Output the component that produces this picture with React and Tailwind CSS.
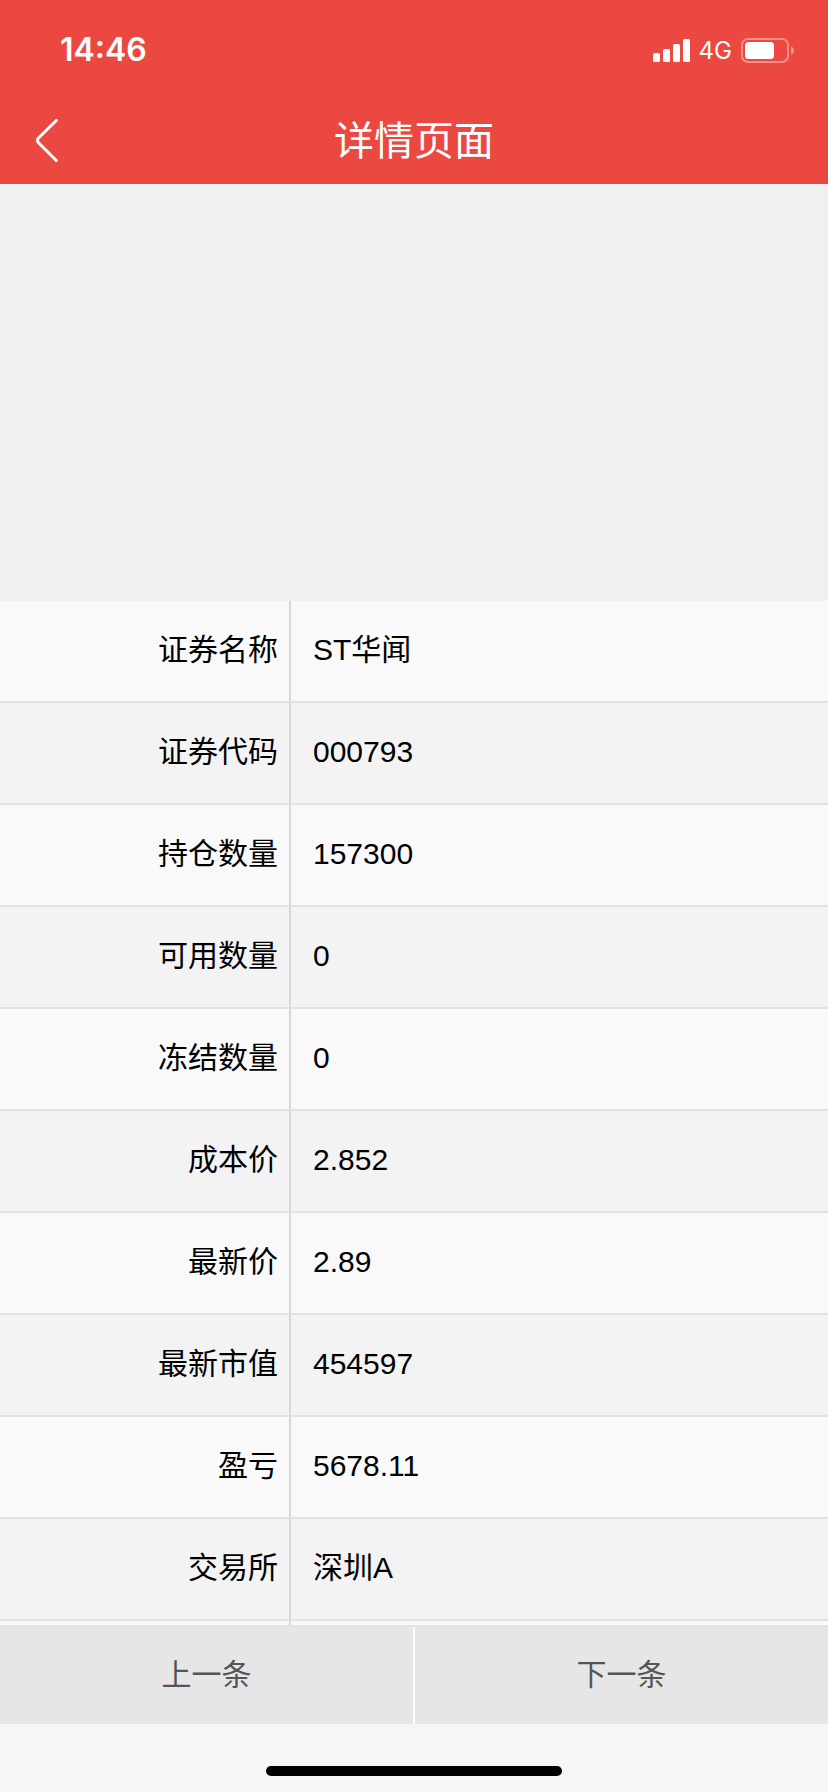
import React from 'react';

const rows = [
    { label: '证券名称', value: 'ST华闻' },
    { label: '证券代码', value: '000793' },
    { label: '持仓数量', value: '157300' },
    { label: '可用数量', value: '0' },
    { label: '冻结数量', value: '0' },
    { label: '成本价', value: '2.852' },
    { label: '最新价', value: '2.89' },
    { label: '最新市值', value: '454597' },
    { label: '盈亏', value: '5678.11' },
    { label: '交易所', value: '深圳A' },
];

const StatusBar = () => (
    <div className="flex h-24 items-center justify-between pt-1 pr-[34px] pl-[60px] font-[Inter,sans-serif]">
        <span className="text-[32px] leading-10 font-semibold">14:46</span>
        <div className="flex items-center gap-[9px]">
            <svg width="37" height="23" viewBox="0 0 37 23" fill="currentColor" aria-hidden="true">
                <rect x="0" y="14" width="7" height="9" rx="1.5" />
                <rect x="10" y="10" width="7" height="13" rx="1.5" />
                <rect x="20" y="5" width="7" height="18" rx="1.5" />
                <rect x="30" y="0" width="7" height="23" rx="1.5" />
            </svg>
            <span className="pt-0.5 text-2xl">4G</span>
            <svg width="53" height="25" viewBox="0 0 53 25" fill="none" aria-hidden="true">
                <rect x="1" y="1" width="46" height="23" rx="6" stroke="currentColor" strokeWidth="2" opacity="0.4" />
                <rect x="4" y="4" width="29" height="17" rx="3.5" fill="currentColor" />
                <path d="M50 8.2c1.8.8 3 2.4 3 4.3s-1.2 3.500-3 4.300z" fill="currentColor" opacity="0.4" />
            </svg>
        </div>
    </div>
);

const Header = () => (
    <header className="shrink-0 bg-[#ea4840] text-white">
        <StatusBar />
        <div className="grid h-22 grid-cols-[96px_1fr_96px] items-center">
            <button type="button" aria-label="返回" className="flex h-full items-center pl-9">
                <svg width="22" height="43" viewBox="0 0 22 43" fill="none" stroke="currentColor" strokeWidth="3" strokeLinecap="round" strokeLinejoin="round" aria-hidden="true">
                    <path d="M20.300 1.500 2.300 19.300Q.700 21.400 2.300 23.500L20.300 41.500" />
                </svg>
            </button>
            <h1 className="pt-0.5 text-center text-[40px] leading-[48px] font-normal">详情页面</h1>
        </div>
    </header>
);

const DetailTable = () => (
    <table className="w-full table-fixed border-separate border-spacing-0 text-[30px] leading-10 text-black">
        <colgroup>
            <col className="w-[291px]" />
            <col />
        </colgroup>
        <tbody>
            {rows.map((row) => (
                <tr key={row.label} className="h-[102px] odd:bg-[#f9f9f9] even:bg-[#f3f3f3]">
                    <th scope="row" className="border-r-2 border-b-2 border-r-[#d8d8d8] border-b-[#e2e2e2] pr-[11px] pb-0.5 text-right font-normal">
                        {row.label}
                    </th>
                    <td className="border-b-2 border-[#e2e2e2] pb-0.5 pl-[22px]">{row.value}</td>
                </tr>
            ))}
            <tr className="h-[102px] bg-[#f9f9f9]">
                <td className="border-r-2 border-[#d8d8d8]"></td>
                <td></td>
            </tr>
        </tbody>
    </table>
);

const App = () => {
    return (
        <div className="flex h-screen flex-col bg-[#f6f6f6] font-['Liberation_Sans','Noto_Sans_CJK_SC',sans-serif]">
            <Header />
            <main className="min-h-0 flex-1 overflow-hidden bg-[#f0f0f0] pt-[417px]">
                <DetailTable />
            </main>
            <nav className="flex h-[99px] shrink-0 border-t-2 border-[#e2e2e2] bg-[#e6e6e6] text-[30px] leading-10 text-[#555]">
                <button type="button" className="flex-1 border-r-2 border-white pb-0.5">上一条</button>
                <button type="button" className="flex-1 pb-0.5">下一条</button>
            </nav>
            <div className="flex h-[68px] shrink-0 items-end justify-center pb-4">
                <div className="h-2.5 w-[296px] rounded-full bg-black"></div>
            </div>
        </div>
    );
};

export default App;
